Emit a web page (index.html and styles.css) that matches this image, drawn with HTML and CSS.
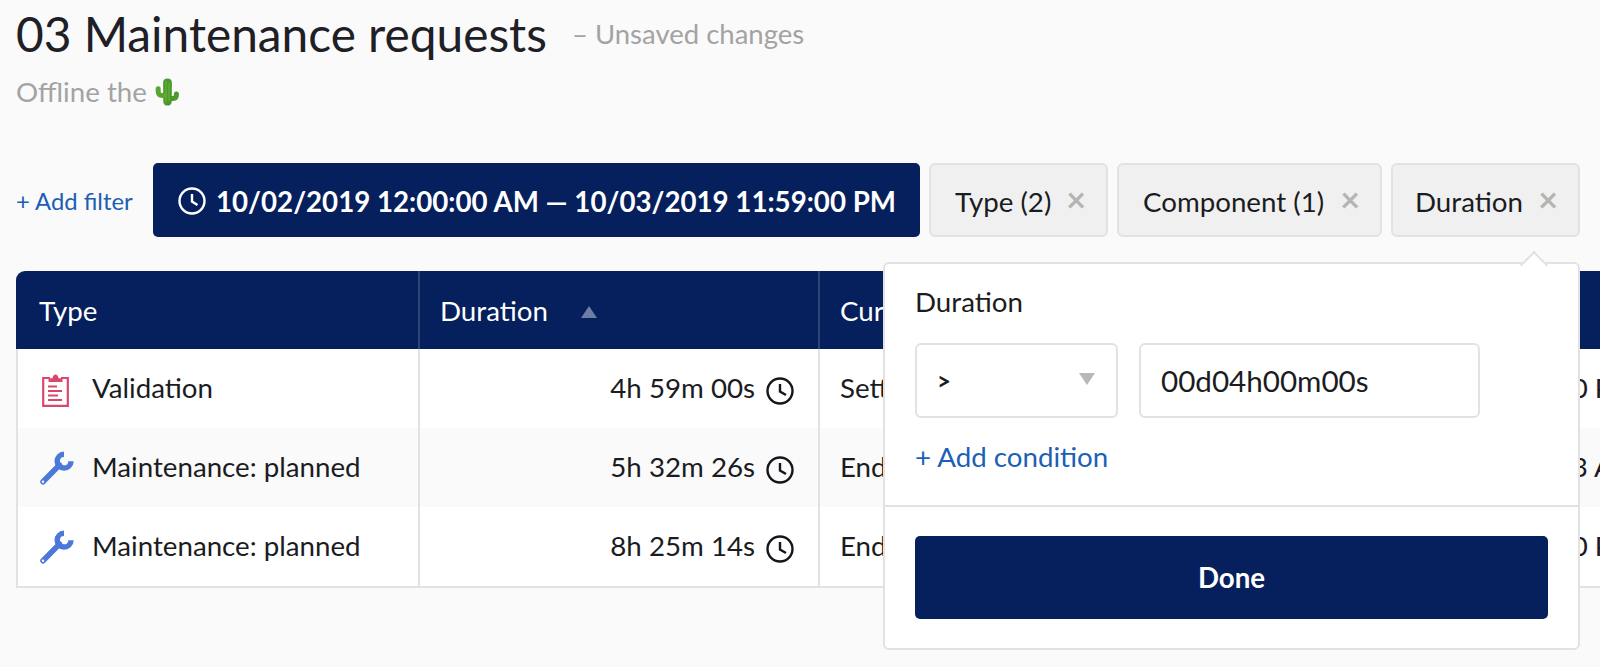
FILE: index.html
```html
<!DOCTYPE html>
<html lang="en">
<head>
<meta charset="utf-8">
<title>03 Maintenance requests</title>
<link rel="stylesheet" href="styles.css">
</head>
<body>
<div class="page">
  <header class="head">
    <div class="title-row">
      <h1 class="title">03 Maintenance requests</h1>
      <span class="unsaved">– Unsaved changes</span>
    </div>
    <p class="subtitle">Offline the
      <svg class="cactus" viewBox="0 0 24 28" aria-hidden="true">
        <path d="M12.500 .6c-2.700 0-4.400 1.700-4.400 3.800l.2 19.300c0 2.400 1.600 3.900 4.200 3.900s4.200-1.500 4.200-3.900l.2-19.300c0-2.100-1.700-3.800-4.400-3.800z" fill="#4c9a2a"/>
        <path d="M9 17.500H7C4.600 17.500 3.200 16 3.200 13.800V10.800" fill="none" stroke="#5aa531" stroke-width="5" stroke-linecap="round"/>
        <path d="M15 20.500h3c2.300 0 3.400-1.500 3.400-3.700v-.8" fill="none" stroke="#4c9a2a" stroke-width="5" stroke-linecap="round"/>
        <path d="M11 3v21M14 5v18" fill="none" stroke="#6cb83f" stroke-width=".9"/>
      </svg>
    </p>
  </header>

  <section class="filters">
    <a class="add-filter">+ Add filter</a>
    <div class="chip-date">
      <svg class="clock" viewBox="0 0 28 28" aria-hidden="true"><circle cx="14" cy="14" r="12.500"/><path d="M14 7v7.500l5.500 3.500"/></svg>
      <span>10/02/2019 12:00:00 AM — 10/03/2019 11:59:00 PM</span>
    </div>
    <div class="chip chip-type"><span>Type (2)</span><span class="x">×</span></div>
    <div class="chip chip-comp"><span>Component (1)</span><span class="x">×</span></div>
    <div class="chip chip-dur"><span>Duration</span><span class="x">×</span></div>
  </section>

  <table class="grid">
    <colgroup><col class="c1"><col class="c2"><col class="c3"><col class="c4"></colgroup>
    <thead>
      <tr>
        <th>Type</th>
        <th><span class="sort">Duration<i class="tri"></i></span></th>
        <th>Current status</th>
        <th>Started</th>
      </tr>
    </thead>
    <tbody>
      <tr>
        <td><div class="type">
          <span class="ico"><svg class="clip" viewBox="0 0 27 33" aria-hidden="true">
            <path class="clip-o" d="M8 4H1.200v27.800h24.600V4H19"/>
            <path class="clip-f" d="M6.500 8V4.200h4C10.800 2 12 .6 13.500.6S16.200 2 16.500 4.200h4V8z"/>
            <path class="clip-o" d="M6 12.500h9M6 17h14M6 21.500h10M6 26h14"/>
          </svg></span>Validation</div></td>
        <td><div class="dur">4h 59m 00s<svg class="clock dark" viewBox="0 0 28 28" aria-hidden="true"><circle cx="14" cy="14" r="12.500"/><path d="M14 7v7.500l6 3.500"/></svg></div></td>
        <td>Setting up</td>
        <td class="when">10/02/2019 11:59:00 PM</td>
      </tr>
      <tr>
        <td><div class="type">
          <span class="ico"><svg class="wrench" viewBox="0 0 35 35" aria-hidden="true">
            <path class="w-s" d="M25 3.200A6.900 6.900 0 1 0 32 10.200"/>
            <path class="w-h" d="M4 30.800L20.500 14"/>
            <circle class="w-d" cx="4" cy="30.800" r="1.200"/>
          </svg></span>Maintenance: planned</div></td>
        <td><div class="dur">5h 32m 26s<svg class="clock dark" viewBox="0 0 28 28" aria-hidden="true"><circle cx="14" cy="14" r="12.500"/><path d="M14 7v7.500l6 3.500"/></svg></div></td>
        <td>Ended</td>
        <td class="when">10/02/2019 10:41:13 AM</td>
      </tr>
      <tr>
        <td><div class="type">
          <span class="ico"><svg class="wrench" viewBox="0 0 35 35" aria-hidden="true">
            <path class="w-s" d="M25 3.200A6.900 6.900 0 1 0 32 10.200"/>
            <path class="w-h" d="M4 30.800L20.500 14"/>
            <circle class="w-d" cx="4" cy="30.800" r="1.200"/>
          </svg></span>Maintenance: planned</div></td>
        <td><div class="dur">8h 25m 14s<svg class="clock dark" viewBox="0 0 28 28" aria-hidden="true"><circle cx="14" cy="14" r="12.500"/><path d="M14 7v7.500l6 3.500"/></svg></div></td>
        <td>Ended</td>
        <td class="when">10/03/2019 02:25:00 PM</td>
      </tr>
    </tbody>
  </table>

  <aside class="popover">
    <div class="pop-body">
      <div class="pop-label">Duration</div>
      <div class="pop-fields">
        <div class="select"><span>&gt;</span><i class="caret"></i></div>
        <div class="input">00d04h00m00s</div>
      </div>
      <a class="add-cond">+ Add condition</a>
    </div>
    <div class="pop-foot">
      <button class="done" type="button">Done</button>
    </div>
  </aside>
</div>
</body>
</html>
```

FILE: styles.css
```css
* { box-sizing: border-box; }
html, body { margin: 0; height: 100%; overflow: hidden; }
body {
  background: #fafafa;
  color: #1a1c22;
  font-family: Lato, "Noto Sans", sans-serif;
  font-size: 27.7px;
}
.page { position: relative; width: 1600px; height: 667px; padding: 0 0 0 16px; overflow: hidden; }

.head { height: 163px; padding-top: 9px; }
.title-row { display: flex; align-items: center; gap: 25px; height: 50px; }
.title { margin: 0; font-size: 47.8px; font-weight: 400; line-height: 50px; color: #1e2026; }
.unsaved { font-size: 27.5px; color: #a3a3a3; margin-top: -2px; }
.subtitle { margin: 17px 0 0; display: flex; align-items: center; gap: 8px; font-size: 27.7px; line-height: 32px; color: #a3a3a3; }
.cactus { width: 24px; height: 28px; }

.filters { display: flex; align-items: stretch; height: 74px; width: 1564px; }
.add-filter { align-self: center; width: 137px; font-size: 23.8px; color: #1c5fb5; padding-top: 2px; white-space: nowrap; }
.chip-date {
  display: flex; align-items: center; gap: 10px;
  width: 767px; padding-left: 25px; padding-top: 2px;
  background: #05205c; color: #fff; border-radius: 5px;
  font-size: 27.7px; font-weight: 700; white-space: nowrap;
}
.clock { width: 28px; height: 28px; flex: none; fill: none; stroke: #fff; stroke-width: 2.400; }
.clock.dark { stroke: #14161c; stroke-width: 2.400; margin-top: 7px; }

.chip {
  display: flex; align-items: center; justify-content: space-between;
  margin-left: 9px; padding: 2px 20px 0 24px;
  background: #f0f0f0; border: 2px solid #e2e2e2; border-radius: 6px;
  font-size: 27.7px; white-space: nowrap;
}
.chip-type { width: 179px; }
.chip-comp { width: 265px; }
.chip-dur { width: 189px; padding-left: 22px; }
.x { color: #b4b4b4; font-size: 34px; line-height: 1; font-weight: 700; margin-top: -4px; }

.grid {
  margin-top: 34px; width: 1700px;
  table-layout: fixed; border-collapse: separate; border-spacing: 0;
  font-size: 27.7px;
}
.c1 { width: 402px; }
.c2 { width: 400px; }
.c3 { width: 340px; }
.c4 { width: 558px; }
.grid th {
  height: 78px; padding: 0 0 0 20px; text-align: left; font-weight: 400;
  background: #05205c; color: #fff;
  border-left: 2px solid #2d4475;
}
.grid th:first-child { border-left: 0; border-top-left-radius: 9px; padding-left: 23px; }
.sort { display: inline-flex; align-items: center; gap: 33px; }
.tri { width: 0; height: 0; border: 8px solid transparent; border-top: 0; border-bottom: 12px solid #6d7ea6; margin-top: 4px; }
.grid td {
  height: 79px; padding: 0 0 2px 20px; background: #fff;
  border-left: 2px solid #e2e2e2; white-space: nowrap;
}
.grid td:first-child { padding-left: 0; }
.grid tbody tr:nth-child(2) td { background: #fafafa; }
.grid tbody tr:last-child td { height: 81px; border-bottom: 2px solid #e2e2e2; }
.when { padding-left: 157px !important; }

.type { display: flex; align-items: center; }
.ico { width: 74px; display: flex; justify-content: center; flex: none; }
.clip { width: 27px; height: 33px; margin-top: 5px; }
.clip-o { fill: none; stroke: #d9486c; stroke-width: 2.200; }
.clip-f { fill: #d9486c; }
.wrench { width: 35px; height: 35px; margin: 4px 0 0 2px; }
.w-s { fill: none; stroke: #4c78da; stroke-width: 5.400; }
.w-h { fill: none; stroke: #4c78da; stroke-width: 5.500; stroke-linecap: round; }
.w-d { fill: #fff; }
.dur { display: flex; align-items: center; justify-content: flex-end; gap: 11px; padding-right: 24px; margin-left: -20px; }

.popover {
  position: absolute; left: 883px; top: 262px; width: 697px; height: 388px;
  background: #fff; border: 2px solid #e2e2e2; border-radius: 6px;
  display: flex; flex-direction: column;
}
.popover::before {
  content: ""; position: absolute; right: 34px; top: -9px;
  width: 18px; height: 18px; background: #fff;
  border-left: 2px solid #e2e2e2; border-top: 2px solid #e2e2e2;
  transform: rotate(45deg);
}
.pop-body { height: 243px; padding: 22px 30px 0; border-bottom: 2px solid #e2e2e2; }
.pop-label { font-size: 27.7px; line-height: 32px; }
.pop-fields { display: flex; gap: 21px; margin-top: 25px; height: 75px; }
.select, .input { background: #fff; border: 2px solid #e2e2e2; border-radius: 6px; display: flex; align-items: center; }
.select { width: 203px; justify-content: space-between; padding: 0 21px 0 20px; font-size: 24px; font-weight: 700; }
.caret { width: 0; height: 0; border: 8px solid transparent; border-bottom: 0; border-top: 12px solid #b8b8b8; margin-top: -3px; }
.input { width: 341px; padding-left: 20px; font-size: 29.6px; }
.add-cond { display: block; margin-top: 23px; font-size: 27.7px; line-height: 32px; color: #1c5fb5; }
.pop-foot { padding: 29px 30px 0; }
.done {
  display: block; width: 100%; height: 83px; border: 0; border-radius: 5px;
  background: #05205c; color: #fff;
  font-family: inherit; font-size: 27.7px; font-weight: 700;
}
```
